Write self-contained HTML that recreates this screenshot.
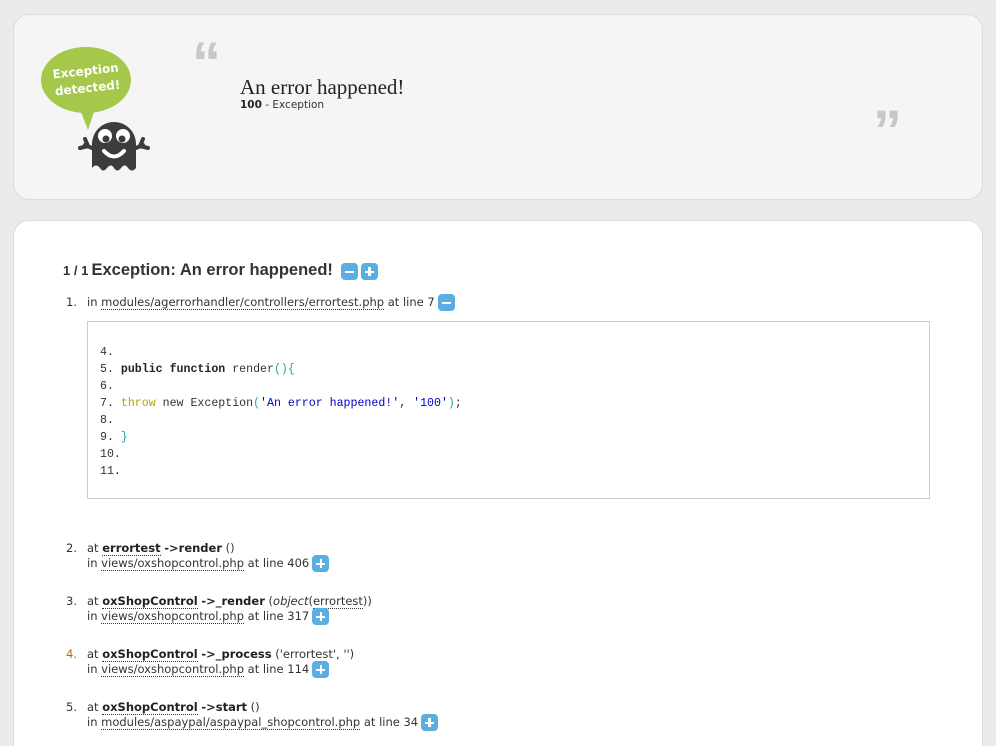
<!DOCTYPE html>
<html><head><meta charset="utf-8"><style>
html,body{margin:0;height:746px;overflow:hidden}
body{background:#ebebeb;font-family:"DejaVu Sans",Verdana,sans-serif;font-size:11.5px;color:#333;width:996px;position:relative}
.p1{position:absolute;left:13px;top:14px;width:968px;height:184px;background:#f5f5f5;border:1px solid #dcdcdc;border-radius:16px}
.p2{position:absolute;left:13px;top:220px;width:968px;height:560px;background:#fff;border:1px solid #dcdcdc;border-radius:16px}
.a{position:absolute;white-space:nowrap}
.u{border-bottom:1px dotted #333}
.btn{display:inline-block;width:17px;height:17px;background:#5aafe0;border-radius:4px;vertical-align:-5px;position:relative;margin-left:3px}
.btn:before{content:"";position:absolute;left:4px;top:7.5px;width:9px;height:2.5px;background:#fff}
.plus:after{content:"";position:absolute;left:7.3px;top:4px;width:2.5px;height:9px;background:#fff}
.code{position:absolute;left:87px;top:321px;width:841px;height:176px;border:1px solid #ccc;background:#fff}
.code div{position:absolute;left:12px;font-family:"Liberation Mono",monospace;font-size:11.6px;color:#333}
b{color:#222}
.it{line-height:14px}
.n{display:inline-block;width:21px}
.ind{display:inline-block;width:21px}
</style></head><body>
<div class="p1"></div>
<svg class="a" style="left:38px;top:44px" width="125" height="128" viewBox="0 0 125 128">
<ellipse cx="48" cy="36" rx="45" ry="33" fill="#a5c84a"/>
<path d="M40 60 L50 86 L58 62Z" fill="#a5c84a"/>
<text x="48" y="31" fill="#fff" font-family="DejaVu Sans" font-size="12" font-weight="bold" text-anchor="middle" transform="rotate(-6 48 31)">Exception</text>
<text x="50" y="48" fill="#fff" font-family="DejaVu Sans" font-size="12" font-weight="bold" text-anchor="middle" transform="rotate(-6 50 48)">detected!</text>
<path d="M54 124 V100 a22 22 0 0 1 44 0 V124 q-4 5 -8 0 q-3 -5 -7 0 q-4 5 -7 0 q-3 -5 -7 0 q-4 5 -7 0 q-4 -5 -8 0z" fill="#3c3c3c"/>
<path d="M54 104 l-7 -3 m3 1 l-3 -7 m3 7 l-8 2 M98 104 l7 -3 m-3 1 l3 -7 m-3 7 l8 2" stroke="#3c3c3c" stroke-width="4" stroke-linecap="round"/>
<circle cx="67" cy="92" r="7" fill="#fff"/><circle cx="85" cy="92" r="7" fill="#fff"/>
<circle cx="68" cy="95" r="3.5" fill="#3c3c3c"/><circle cx="84" cy="95" r="3.5" fill="#3c3c3c"/>
<path d="M66 107 q10 11 20 0" stroke="#fff" stroke-width="4" fill="none" stroke-linecap="round"/>
</svg>
<div class="a" style="left:192px;top:38px;font-family:'Liberation Sans',sans-serif;font-size:58px;font-weight:bold;color:#c8c8c8;line-height:52px">“</div>
<div class="a" style="left:873px;top:106px;font-family:'Liberation Sans',sans-serif;font-size:58px;font-weight:bold;color:#c8c8c8;line-height:52px">”</div>
<div class="a" style="left:240px;top:75px;font-family:'Liberation Serif',serif;font-size:21px;color:#222">An error happened!</div>
<div class="a" style="left:240px;top:99px;font-size:10.5px"><b>100</b> - Exception</div>
<div class="p2"></div>
<div class="a" style="left:63px;top:261px;font-family:'Liberation Sans',sans-serif;font-weight:bold;color:#333"><span style="font-size:13px">1 / 1</span> <span style="font-size:16.5px">Exception: An error happened!</span><span class="btn" style="margin-left:8px"></span><span class="btn plus"></span></div>
<div class="a it" style="left:66px;top:294px"><span class="n">1.</span>in <span class="u">modules/agerrorhandler/controllers/errortest.php</span> at line 7<span class="btn"></span></div>
<div class="code">
<div style="top:24px">4.</div>
<div style="top:41px">5. <b>public function</b> render<span style="color:#2a9">(){</span></div>
<div style="top:58px">6.</div>
<div style="top:75px">7. <span style="color:#aa0">throw</span> new Exception<span style="color:#2a9">(</span><span style="color:#00c">'An error happened!'</span>, <span style="color:#00c">'100'</span><span style="color:#2a9">)</span>;</div>
<div style="top:92px">8.</div>
<div style="top:109px">9. <span style="color:#2a9">}</span></div>
<div style="top:126px">10.</div>
<div style="top:143px">11.</div>
</div>
<div class="a it" style="left:66px;top:541px"><span class="n">2.</span>at <b class="u">errortest</b> <b>-&gt;render</b> ()<br><span class="ind"></span>in <span class="u">views/oxshopcontrol.php</span> at line 406<span class="btn plus"></span></div>
<div class="a it" style="left:66px;top:594px"><span class="n">3.</span>at <b class="u">oxShopControl</b> <b>-&gt;_render</b> (<i>object</i>(<span class="u">errortest</span>))<br><span class="ind"></span>in <span class="u">views/oxshopcontrol.php</span> at line 317<span class="btn plus"></span></div>
<div class="a it" style="left:66px;top:647px"><span class="n" style="color:#b60">4.</span>at <b class="u">oxShopControl</b> <b>-&gt;_process</b> ('errortest', '')<br><span class="ind"></span>in <span class="u">views/oxshopcontrol.php</span> at line 114<span class="btn plus"></span></div>
<div class="a it" style="left:66px;top:700px"><span class="n">5.</span>at <b class="u">oxShopControl</b> <b>-&gt;start</b> ()<br><span class="ind"></span>in <span class="u">modules/aspaypal/aspaypal_shopcontrol.php</span> at line 34<span class="btn plus"></span></div>
</body></html>
